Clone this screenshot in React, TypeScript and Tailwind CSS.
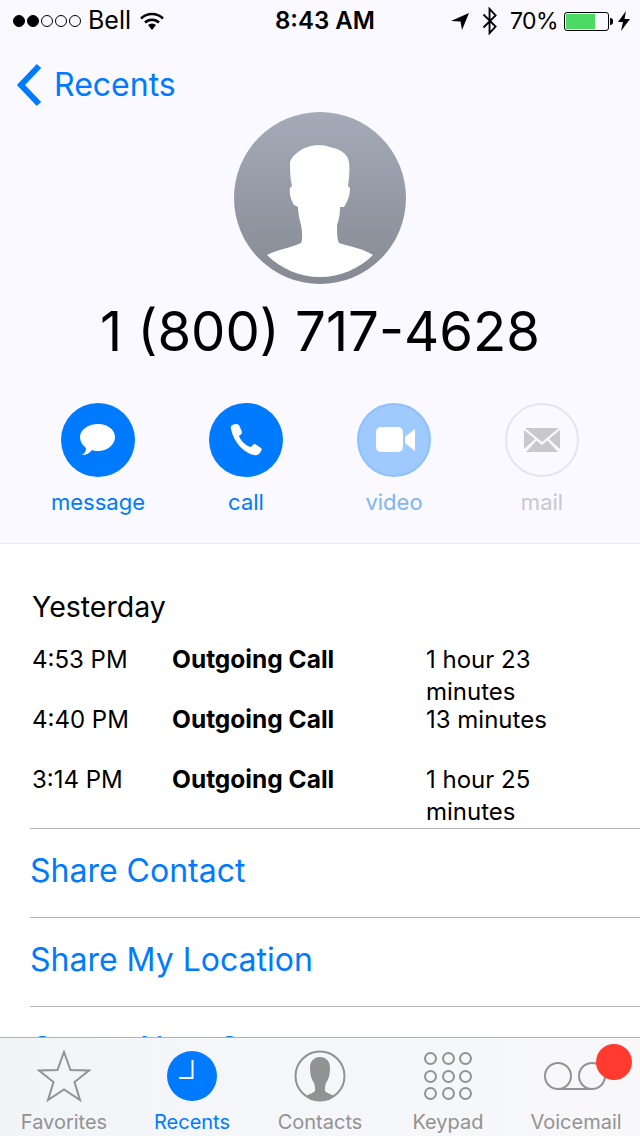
import { ReactNode } from "react";

const BLUE = "#007aff";

function StatusBar() {
  return (
    <div className="relative flex h-10 items-center justify-between pl-[13px] pr-[10px] pt-[2px] text-black">
      <div className="flex items-center">
        <div className="flex gap-[2px]">
          {[0, 1, 2, 3, 4].map((i) => (
            <span
              key={i}
              className={i < 2 ? "h-[12px] w-[12px] rounded-full border border-black bg-black" : "h-[12px] w-[12px] rounded-full border border-black"}
            />
          ))}
        </div>
        <span className="ml-[7px] text-[25px]">Bell</span>
        <svg className="ml-[9px]" width="24" height="18" viewBox="0 0 24 18">
          <path d="M1 6.5 A16 16 0 0 1 23 6.5" fill="none" stroke="#000" strokeWidth="2.5" />
          <path d="M5 10.5 A10 10 0 0 1 19 10.5" fill="none" stroke="#000" strokeWidth="2.5" />
          <path d="M8 13 L12 18 L16 13 A6 6 0 0 0 8 13 Z" fill="#000" />
        </svg>
      </div>
      <span className="absolute left-[275px] top-[1px] text-[24px] font-semibold leading-[40px]">8:43 AM</span>
      <div className="flex items-center">
        <svg width="20" height="20" viewBox="0 0 20 20">
          <path d="M1 10 L19 2 L12 19 L10.5 10.5 Z" fill="#000" />
        </svg>
        <svg className="ml-[11px]" width="18" height="28" viewBox="0 0 18 30">
          <path d="M2 8 L15 21 L8.5 28 L8.5 2 L15 9 L2 22" fill="none" stroke="#000" strokeWidth="2" />
        </svg>
        <span className="ml-[11px] text-[23px] tracking-[-0.6px]">70%</span>
        <div className="ml-[6px] flex h-[19px] w-[45px] items-center rounded-[3px] border border-black p-[1px]">
          <div className="h-full w-[29px] bg-[#4cd964]" />
        </div>
        <div className="ml-[1px] h-[7px] w-[3px] rounded-r-full bg-black" />
        <svg className="ml-[5px]" width="12" height="20" viewBox="0 0 12 20">
          <path d="M8 0 L0 11 L5 11 L3 20 L12 8 L6.5 8 Z" fill="#000" />
        </svg>
      </div>
    </div>
  );
}

function Avatar() {
  return (
    <div className="mx-auto h-[172px] w-[172px] overflow-hidden rounded-full bg-gradient-to-b from-[#a5aab8] to-[#858a94]">
      <svg width="172" height="172" viewBox="0 0 172 172">
        <path
          d="M33 143 C42 138 56 136 67 131 C69 127 68 118 67 113 C65 106 64 100 64 95 L60 93 C57 88 55 82 56 76 L58 74 C56 66 56 58 56 50 C58 43 68 36 77 34 C84 32 90 33 96 35 C106 37 114 42 115 50 C116 58 115 66 114 74 L116 76 C116 84 113 90 110 95 L106 95 C106 102 105 108 103 113 C103 120 103 127 105 131 C118 135 130 137 139 143 C125 157 106 165 86 165 C66 165 47 157 33 143 Z"
          fill="#fff"
        />
      </svg>
    </div>
  );
}

function Action({ label, icon, circle, text }: { label: string; icon: ReactNode; circle: string; text: string }) {
  return (
    <div className="flex w-[148px] flex-col items-center">
      <div className={`flex h-[74px] w-[74px] items-center justify-center rounded-full ${circle}`}>{icon}</div>
      <span className={`mt-[11px] text-[22px] leading-[28px] ${text}`}>{label}</span>
    </div>
  );
}

function CallRow({ time, type, duration }: { time: string; type: string; duration: string }) {
  return (
    <div className="flex h-[60px] pl-[32px] leading-[32px] text-black">
      <div className="w-[140px] text-[24px]">{time}</div>
      <div className="w-[254px] -translate-y-[1px] text-[24.5px] font-bold">{type}</div>
      <div className="w-[180px] text-[24px]">{duration}</div>
    </div>
  );
}

function LinkRow({ label }: { label: string }) {
  return (
    <div className="ml-[30px] flex h-[89px] shrink-0 items-center border-t border-[#b5b5b8] pb-[4px] text-[32px] text-[#007aff]">
      {label}
    </div>
  );
}

function Tab({ label, active, icon }: { label: string; active?: boolean; icon: ReactNode }) {
  return (
    <div className="flex w-[128px] flex-col items-center">
      <div className="flex h-[76px] items-center justify-center">{icon}</div>
      <span className={active ? "-mt-[4px] text-[20px] leading-[24px] text-[#007aff]" : "-mt-[4px] text-[20px] leading-[24px] text-[#929292]"}>
        {label}
      </span>
    </div>
  );
}

export default function App() {
  return (
    <div
      className="flex h-[1136px] w-[640px] flex-col overflow-hidden bg-white"
      style={{ fontFamily: "Inter, 'Liberation Sans', sans-serif" }}
    >
      <div className="h-[544px] shrink-0 border-b border-[#e9e9ee] bg-[#f9f9ff]">
        <StatusBar />
        <div className="flex h-[72px] items-center pl-[16px] pt-[18px]">
          <svg width="26" height="44" viewBox="0 0 26 44">
            <path d="M23 3 L5 22 L23 41" fill="none" stroke={BLUE} strokeWidth="6" />
          </svg>
          <span className="ml-[12px] text-[32px] text-[#007aff]">Recents</span>
        </div>
        <Avatar />
        <div className="mt-[11px] text-center text-[54.5px] leading-[72px] text-black">1 (800) 717-4628</div>
        <div className="mt-[36px] flex pl-[24px]">
          <Action
            label="message"
            circle="bg-[#007aff]"
            text="text-[#007aff]"
            icon={
              <svg width="38" height="34" viewBox="0 0 38 34">
                <path d="M19 1 C29 1 36 7 36 14 C36 22 28 28 19 28 C17 28 15 28 13 27 C11 30 7 32 3 32 C6 30 7 28 7 25 C3 22 1 18 1 14 C1 7 9 1 19 1 Z" fill="#fff" />
              </svg>
            }
          />
          <Action
            label="call"
            circle="bg-[#007aff]"
            text="text-[#007aff]"
            icon={
              <svg width="34" height="34" viewBox="0 0 34 34">
                <path d="M2 6 C1 3 3 1 8 1 C9 1 10 2 10.5 3 L13 9 C13 11 11 12 10 13 C11 17 17 23 22 24 C23 23 24 21 26 21 L32 25 C33 26 33 27 32 28 C31 31 28 33 25 32 C15 30 5 20 2 6 Z" fill="#fff" />
              </svg>
            }
          />
          <Action
            label="video"
            circle="bg-[#9fcaff] border-2 border-[#8fc0fd]"
            text="text-[#7fb5f0]"
            icon={
              <svg className="ml-[3px]" width="40" height="26" viewBox="0 0 40 26">
                <rect x="0" y="0" width="27" height="25" rx="5" fill="#fff" />
                <path d="M29 10 L39 2 L39 24 L29 16 Z" fill="#fff" />
              </svg>
            }
          />
          <Action
            label="mail"
            circle="border-2 border-[#e6e6ea]"
            text="text-[#c8c8cd]"
            icon={
              <svg width="36" height="24" viewBox="0 0 36 24">
                <path d="M1 0 L35 0 L18 14 Z" fill="#c8c8cd" />
                <path d="M0 2 L11 11 L0 21 Z" fill="#c8c8cd" />
                <path d="M36 2 L25 11 L36 21 Z" fill="#c8c8cd" />
                <path d="M12.5 12.5 L18 17 L23.5 12.5 L34 24 L2 24 Z" fill="#c8c8cd" />
              </svg>
            }
          />
        </div>
      </div>

      <div className="min-h-0 flex-1 overflow-hidden">
        <div className="pb-[18px] pl-[32px] pt-[44px] text-[28.5px] leading-[38px] text-black">Yesterday</div>
        <CallRow time="4:53 PM" type="Outgoing Call" duration="1 hour 23 minutes" />
        <CallRow time="4:40 PM" type="Outgoing Call" duration="13 minutes" />
        <CallRow time="3:14 PM" type="Outgoing Call" duration="1 hour 25 minutes" />
        <div className="h-[4px]" />
        <LinkRow label="Share Contact" />
        <LinkRow label="Share My Location" />
        <LinkRow label="Create New Contact" />
      </div>

      <div className="relative flex h-[99px] shrink-0 border-t border-[#b2b2b2] bg-gradient-to-r from-[#f2f5f8] to-[#f8f8fa]">
        <Tab
          label="Favorites"
          icon={
            <svg width="54" height="52" viewBox="0 0 54 52">
              <path d="M27 2 L33.5 20 L52 20.5 L37.5 32 L43 50 L27 39.5 L11 50 L16.5 32 L2 20.5 L20.5 20 Z" fill="none" stroke="#929292" strokeWidth="2" />
            </svg>
          }
        />
        <Tab
          label="Recents"
          active
          icon={
            <svg width="50" height="50" viewBox="0 0 50 50">
              <circle cx="25" cy="25" r="25" fill={BLUE} />
              <path d="M25.5 9 L25.5 27 L12 27" fill="none" stroke="#fff" strokeWidth="2" />
            </svg>
          }
        />
        <Tab
          label="Contacts"
          icon={
            <svg className="mr-[1px]" width="52" height="52" viewBox="0 0 52 52">
              <clipPath id="contact-clip">
                <circle cx="26" cy="26" r="24" />
              </clipPath>
              <path
                clipPath="url(#contact-clip)"
                d="M8 48 C12 45 18 44 21 41 C21 38 21 36 20 33 C17 29 16 24 16 18 C16 11 20 7 26 7 C32 7 36 11 36 18 C36 24 35 29 32 33 C31 36 31 38 31 41 C34 44 40 45 44 48 L40 52 L12 52 Z"
                fill="#929292"
              />
              <circle cx="26" cy="26" r="24.5" fill="none" stroke="#929292" strokeWidth="2" />
            </svg>
          }
        />
        <Tab
          label="Keypad"
          icon={
            <div className="grid grid-cols-3 gap-[4.5px]">
              {[0, 1, 2, 3, 4, 5, 6, 7, 8].map((i) => (
                <span key={i} className="h-[13px] w-[13px] rounded-full border-2 border-[#929292]" />
              ))}
            </div>
          }
        />
        <Tab
          label="Voicemail"
          icon={
            <svg className="mr-[2px]" width="62" height="30" viewBox="0 0 62 30">
              <circle cx="14" cy="15" r="13" fill="none" stroke="#929292" strokeWidth="2" />
              <circle cx="48" cy="15" r="13" fill="none" stroke="#929292" strokeWidth="2" />
              <path d="M14 28 L48 28" stroke="#929292" strokeWidth="2" />
            </svg>
          }
        />
        <div className="absolute left-[596px] top-[6px] h-[36px] w-[36px] rounded-full bg-[#ff3b30]" />
      </div>
    </div>
  );
}
